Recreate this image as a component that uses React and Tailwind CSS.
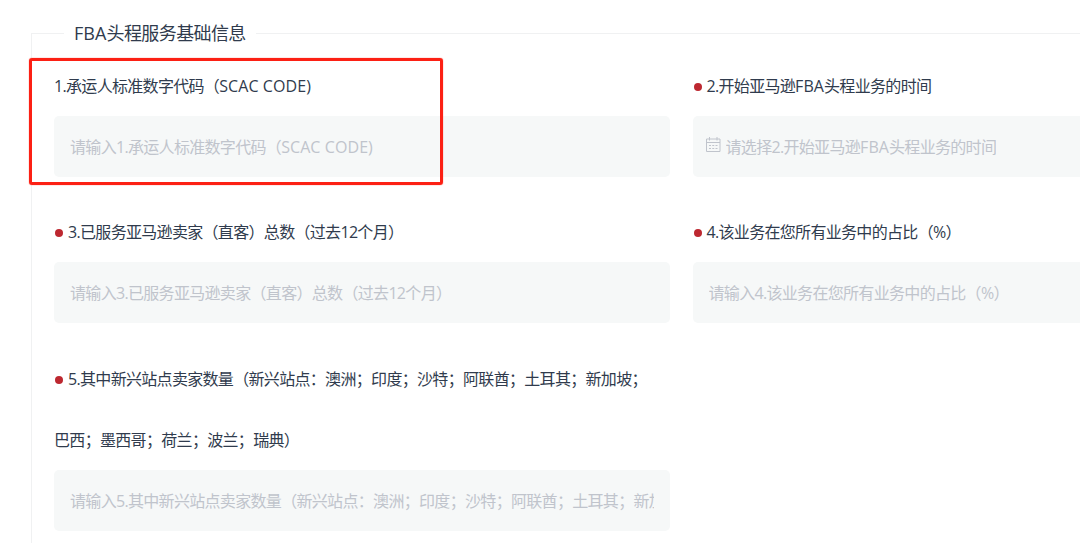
import clsx from 'clsx';

const fields = [
    { id: 1, label: '1.承运人标准数字代码（SCAC CODE)', action: '请输入' },
    { id: 2, label: '2.开始亚马逊FBA头程业务的时间', action: '请选择', required: true, date: true },
    { id: 3, label: '3.已服务亚马逊卖家（直客）总数（过去12个月）', action: '请输入', required: true },
    { id: 4, label: '4.该业务在您所有业务中的占比（%）', action: '请输入', required: true },
    {
        id: 5,
        label: '5.其中新兴站点卖家数量（新兴站点：澳洲；印度；沙特；阿联酋；土耳其；新加坡；巴西；墨西哥；荷兰；波兰；瑞典）',
        action: '请输入',
        required: true,
    },
];

// Latin words keep a looser tracking than the Chinese around them
const Mixed = ({ text }) =>
    text.split(/([A-Z][A-Z ]*\)?)/).map((part, i) =>
        i % 2 ? <span key={i} className="tracking-[0.08px]">{part}</span> : part
    );

const CalendarIcon = () => (
    <svg width="15" height="15" viewBox="0 0 15 15" fill="none" stroke="#c0c4cc" className="mb-[5px] ml-px shrink-0">
        <path d="M.5 2h13.5v12.5H.5zM.5 5.5h13.5M3.5 0v3.5M11 0v3.5" />
        <path d="M3 8.5h2M6.25 8.5h2M9.5 8.5h2M3 11.5h2M6.25 11.5h2M9.5 11.5h2" />
    </svg>
);

const Field = ({ label, action, required, date }) => (
    <div className="w-[616px] last:mt-px">
        <div className="pr-5 pt-px leading-[61px] text-[#303b4d]">
            {required && <span className="mb-px ml-px mr-[5px] inline-block h-2 w-2 rounded-full bg-[#bd2830]" />}
            <Mixed text={label} />
        </div>
        <div className={clsx('-mt-px flex h-[61px] items-center rounded-[5px] bg-[#f6f8f8]', date ? 'gap-[5px] pl-3 pr-4' : 'px-4')}>
            {date && <CalendarIcon />}
            <div className="min-w-0 overflow-hidden whitespace-nowrap text-[#c0c4cc]">
                <Mixed text={action + label} />
            </div>
        </div>
    </div>
);

const App = () => (
    <main className="relative h-[543px] w-[1080px] overflow-hidden bg-white font-['Open_Sans','Noto_Sans_CJK_SC',sans-serif] text-[16px] tracking-[-0.68px]">
        <div className="pl-[31px] pt-5">
            <fieldset className="h-[560px] w-[1320px] border border-[#f0f1f2] pl-[22px]">
                <legend className="ml-[10px] px-[10px] text-[18px] leading-[26px] tracking-[-0.6px] text-[#303b4d]">
                    <Mixed text="FBA头程服务基础信息" />
                </legend>
                <div className="mt-[9px] grid grid-cols-[616px_616px] gap-x-[22.5px] gap-y-[24px]">
                    {fields.map(field => (
                        <Field key={field.id} {...field} />
                    ))}
                </div>
            </fieldset>
        </div>
        {/* Highlight around the carrier code field */}
        <div className="pointer-events-none absolute left-[29px] top-[58px] h-[127px] w-[414px] rounded-[3px] border-[3px] border-[#fc2014] shadow-[0_0_1px_#fc2014]" />
    </main>
);

export default App;
